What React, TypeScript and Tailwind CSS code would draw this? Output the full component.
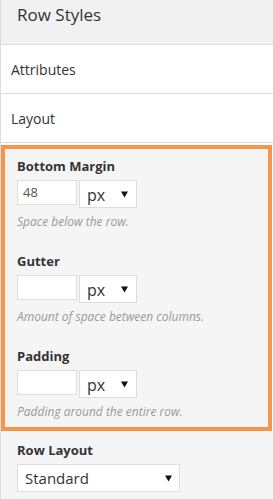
import React from "react";

const font = { fontFamily: '"Open Sans", "Liberation Sans", sans-serif' };

function Arrow() {
  return (
    <svg width="7" height="7" viewBox="0 0 7 7" className="shrink-0">
      <path d="M0 0.5 L7 0.5 L3.5 6.5 Z" fill="#111" />
    </svg>
  );
}

function Field({ label, value, desc, last }: { label: string; value: string; desc: string; last?: boolean }) {
  return (
    <div className={last ? "" : "mb-[21px]"}>
      <div className="text-[13px] leading-[18px] font-bold text-[#333] mb-[5px]">{label}</div>
      <div className="flex items-start gap-[2px]">
        <div className="w-[60px] h-[25px] bg-white border border-[#ddd] pl-[5px] text-[13px] leading-[22px] text-[#555]">
          {value}
        </div>
        <div className="w-[58px] h-[28px] bg-white border border-[#ddd] pl-[7px] pr-[8px] flex items-center justify-between">
          <span className="text-[16px] leading-[26px] text-[#333] pt-[1px]">px</span>
          <Arrow />
        </div>
      </div>
      <div className="mt-[5px] text-[12px] leading-[18px] italic text-[#999]">{desc}</div>
    </div>
  );
}

export default function App() {
  return (
    <div style={font} className="w-[273px] h-[499px] border-l border-[#ddd] bg-[#f5f5f5] overflow-hidden">
      <div className="h-[45px] bg-[#f1f1f1] border-b border-[#ddd] pl-[16px] pt-[3px]">
        <div className="text-[17px] leading-[24px] text-[#333]">Row Styles</div>
      </div>
      <div className="h-[49px] bg-white border-b border-[#ddd] pl-[10px] flex items-center text-[14px] text-[#333]">
        Attributes
      </div>
      <div className="h-[49px] bg-white border-b border-[#ddd] pl-[10px] flex items-center text-[14px] text-[#333]">
        Layout
      </div>
      <div className="bg-white pt-[2px]">
        <div className="mr-[1px] border-4 border-[#f7954a] bg-[#f5f5f5] pl-[12px] pt-[8px] pb-[6px]">
          <Field label="Bottom Margin" value="48" desc="Space below the row." />
          <Field label="Gutter" value="" desc="Amount of space between columns." />
          <Field label="Padding" value="" desc="Padding around the entire row." last />
        </div>
      </div>
      <div className="pl-[16px] pt-[10px]">
        <div className="text-[13px] leading-[18px] font-bold text-[#333] mb-[5px]">Row Layout</div>
        <div className="w-[163px] h-[28px] bg-white border border-[#ddd] pl-[7px] pr-[7px] flex items-center justify-between">
          <span className="text-[15px] leading-[26px] text-[#333]">Standard</span>
          <Arrow />
        </div>
      </div>
    </div>
  );
}
